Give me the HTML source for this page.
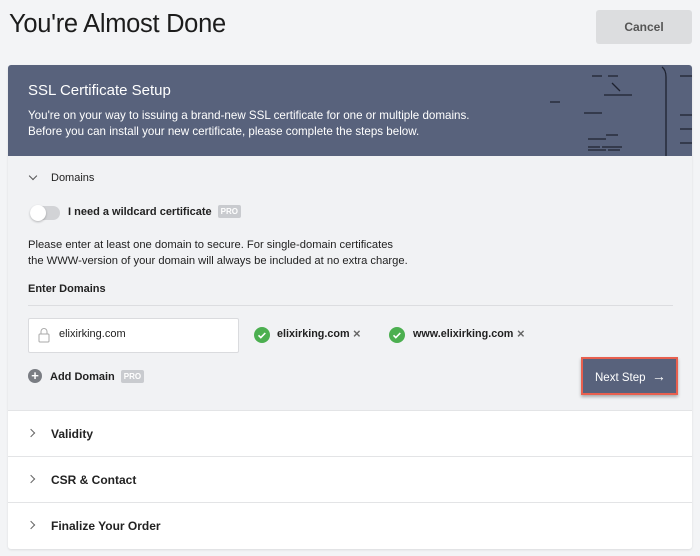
<!DOCTYPE html><html><head><style>
*{box-sizing:border-box;margin:0;padding:0}
body{width:700px;height:556px;background:#f3f4f6;font-family:"Liberation Sans",sans-serif;color:#222;position:relative;overflow:hidden}
.abs{position:absolute}
h1{position:absolute;left:9px;top:10px;font-size:25.5px;font-weight:normal;color:#1c1c1c;letter-spacing:-0.3px}
.cancel{left:596px;top:10px;width:96px;height:34px;background:#dcdddf;border-radius:3px;font-size:12px;font-weight:bold;color:#555;text-align:center;line-height:34px}
.card{left:8px;top:65px;width:684px;height:484px;background:#fff;border-radius:3px;overflow:hidden;box-shadow:0 1px 2px rgba(0,0,0,.1)}
.hdr{left:0;top:0;width:684px;height:91px;background:#58627c;color:#fff}
.body{left:0;top:91px;width:684px;height:254px;background:#f1f2f4}
.row{left:0;width:684px;height:46px;border-top:1px solid #e3e4e6;font-size:12px;font-weight:bold;color:#222}
.row span{position:absolute;left:43px;top:16px}
.row i{position:absolute;left:20px;top:19px;width:6px;height:6px;border-right:1.3px solid #666;border-top:1.3px solid #666;transform:rotate(45deg)}
.pro{display:inline-block;background:#c9cbcf;color:#fff;font-size:8px;font-weight:bold;padding:2px 3px;border-radius:2px;vertical-align:1px;margin-left:6px}
.t{font-size:11px;color:#222}
.chk{width:16px;height:16px;border-radius:50%;background:#4caf50}
.x{font-size:13px;color:#666;font-weight:bold}
</style></head><body>
<h1>You're Almost Done</h1>
<div class="abs cancel">Cancel</div>
<div class="abs card">
 <div class="abs hdr">
  <div class="abs" style="left:20px;top:17px;font-size:15px">SSL Certificate Setup</div>
  <div class="abs" style="left:20px;top:43px;font-size:11.6px;line-height:16px">You're on your way to issuing a brand-new SSL certificate for one or multiple domains.<br>Before you can install your new certificate, please complete the steps below.</div>
  <svg class="abs" style="left:540px;top:0" width="144" height="91" stroke="#1e2230" stroke-width="1.3" fill="none">
   <path d="M44 11h10M60 11h10M66 30h18M56 30h10M64 18l8 8M2 37h10M36 48h18M58 70h12M40 74h18M54 82h20M40 82h12"/>
   <path d="M114 2q4 3 4 10v80M132 11h12M132 50h12M132 64h12M132 78h12M40 85h18M60 85h12"/>
  </svg>
 </div>
 <div class="abs body">
  <div class="abs" style="left:22px;top:17px;width:6px;height:6px;border-right:1.2px solid #555;border-bottom:1.2px solid #555;transform:rotate(45deg)"></div>
  <div class="abs" style="left:43px;top:16px;font-size:11px;color:#222">Domains</div>
  <div class="abs" style="left:22px;top:50px;width:30px;height:14px;border-radius:7px;background:#d2d3d6"></div>
  <div class="abs" style="left:22px;top:49px;width:16px;height:16px;border-radius:50%;background:#fff;box-shadow:0 1px 2px rgba(0,0,0,.25)"></div>
  <div class="abs t" style="left:60px;top:49px;font-weight:bold">I need a wildcard certificate<span class="pro">PRO</span></div>
  <div class="abs t" style="left:20px;top:81px;line-height:16px;font-size:11.2px">Please enter at least one domain to secure. For single-domain certificates<br>the WWW-version of your domain will always be included at no extra charge.</div>
  <div class="abs t" style="left:20px;top:127px;font-weight:bold">Enter Domains</div>
  <div class="abs" style="left:20px;top:149px;width:645px;height:1px;background:#dcdde0"></div>
  <div class="abs" style="left:20px;top:162px;width:211px;height:35px;background:#fff;border:1px solid #dadbde;border-radius:2px"></div>
  <svg class="abs" style="left:30px;top:171px" width="12" height="16" fill="none" stroke="#aaa" stroke-width="1"><path d="M3 7V4.5a3 3 0 0 1 6 0V7"/><rect x="1" y="7" width="10" height="8" rx="1"/></svg>
  <div class="abs t" style="left:51px;top:172px">elixirking.com</div>
  <div class="abs chk" style="left:246px;top:171px"></div>
  <svg class="abs" style="left:246px;top:171px" width="16" height="16" fill="none" stroke="#fff" stroke-width="1.6"><path d="M4.5 8.3l2.3 2.3 4.5-4.6"/></svg>
  <div class="abs t" style="left:269px;top:172px;font-weight:bold;font-size:10.8px">elixirking.com</div>
  <div class="abs x" style="left:345px;top:170px">×</div>
  <div class="abs chk" style="left:381px;top:171px"></div>
  <svg class="abs" style="left:381px;top:171px" width="16" height="16" fill="none" stroke="#fff" stroke-width="1.6"><path d="M4.5 8.3l2.3 2.3 4.5-4.6"/></svg>
  <div class="abs t" style="left:405px;top:172px;font-weight:bold;font-size:10.8px">www.elixirking.com</div>
  <div class="abs x" style="left:509px;top:170px">×</div>
 </div>
 <div class="abs" style="left:20px;top:304px;width:14px;height:14px;border-radius:50%;background:#7a7d83;color:#fff;font-size:13px;line-height:14px;text-align:center;font-weight:bold">+</div>
 <div class="abs t" style="left:42px;top:305px;font-weight:bold">Add Domain<span class="pro">PRO</span></div>
 <div class="abs" style="left:573px;top:292px;width:97px;height:38px;border:2px solid #e8604f;box-shadow:0 2px 3px rgba(0,0,0,.3)"></div>
 <div class="abs" style="left:575px;top:294px;width:93px;height:34px;background:#58627c;color:#fff;font-size:11.5px;line-height:34px;padding-left:12px">Next Step &nbsp;<span style="font-size:14px">→</span></div>
 <div class="abs row" style="top:345px;background:#fff"><i></i><span>Validity</span></div>
 <div class="abs row" style="top:391px;background:#fff"><i></i><span>CSR &amp; Contact</span></div>
 <div class="abs row" style="top:437px;background:#fff"><i></i><span>Finalize Your Order</span></div>
</div>
</body></html>
